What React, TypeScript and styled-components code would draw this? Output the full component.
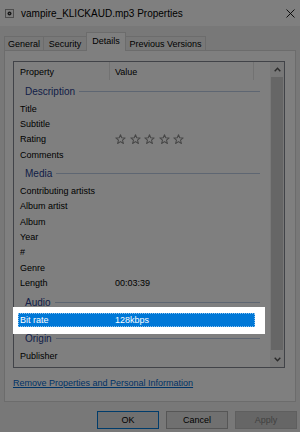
import React from 'react';
import styled, { createGlobalStyle } from 'styled-components';

const GlobalStyle = createGlobalStyle`
  html, body {
    margin: 0;
    padding: 0;
    background: #f0f0f0;
  }
  body {
    font-family: 'Liberation Sans', Arial, sans-serif;
    overflow: hidden;
  }
`;

const Window = styled.div`
  width: 300px;
  height: 432px;
  background: #f0f0f0;
  display: flex;
  flex-direction: column;
  color: #000;
  font-size: 9px;
`;

const TitleBar = styled.div`
  height: 26px;
  background: #fff;
  display: flex;
  align-items: center;
  padding: 1px 5px 0 5px;
  box-sizing: border-box;
`;

const TitleText = styled.span`
  flex: 1;
  margin-left: 7px;
  font-size: 10px;
`;

const TabStrip = styled.div`
  display: flex;
  align-items: flex-end;
  height: 24px;
  padding-left: 4px;
`;

const Tab = styled.div<{ $active?: boolean; $w: number }>`
  position: relative;
  width: ${(p) => p.$w}px;
  height: ${(p) => (p.$active ? 19 : 14)}px;
  margin-bottom: ${(p) => (p.$active ? -1 : 0)}px;
  margin-left: -1px;
  padding-bottom: ${(p) => (p.$active ? 2 : 0)}px;
  box-sizing: border-box;
  border: 1px solid #d9d9d9;
  border-bottom: none;
  background: ${(p) => (p.$active ? '#fff' : '#f0f0f0')};
  display: flex;
  align-items: center;
  justify-content: center;
  &:first-child {
    margin-left: 0;
  }
`;

const Panel = styled.div`
  margin: 0 4px;
  height: 352px;
  box-sizing: border-box;
  border: 1px solid #d9d9d9;
  background: #fff;
  padding: 10px 0 0 8px;
  display: flex;
  flex-direction: column;
`;

const ListBox = styled.div`
  width: 272px;
  height: 307px;
  box-sizing: border-box;
  border: 1px solid #828790;
  background: #fff;
  display: flex;
`;

const ListContent = styled.div`
  flex: 1;
  display: flex;
  flex-direction: column;
`;

const HeaderRow = styled.div`
  display: flex;
  height: 18px;
  flex-shrink: 0;
`;

const HeaderCell = styled.div<{ $w: number }>`
  width: ${(p) => p.$w}px;
  box-sizing: border-box;
  border-right: 1px solid #e5e5e5;
  padding: 1px 0 0 ${(p) => (p.$w > 100 ? 5 : 6)}px;
  display: flex;
  align-items: center;
`;

const GroupRow = styled.div`
  display: flex;
  align-items: center;
  height: 21px;
  flex-shrink: 0;
  padding: 1.5px 10px 0 11px;
  box-sizing: border-box;
`;

const GroupLabel = styled.span`
  font-size: 10px;
  color: #26408f;
`;

const GroupLine = styled.div`
  flex: 1;
  height: 1px;
  margin-left: 4px;
  background: #bccce4;
`;

const Item = styled.div<{ $selected?: boolean }>`
  display: flex;
  align-items: center;
  flex-shrink: 0;
  width: 237px;
  height: ${(p) => (p.$selected ? 14.35 : 15.35)}px;
  margin-left: ${(p) => (p.$selected ? 0 : 4)}px;
  background: ${(p) => (p.$selected ? '#0078d7' : 'transparent')};
  color: ${(p) => (p.$selected ? '#fff' : '#000')};
  outline: ${(p) => (p.$selected ? '1px dotted rgba(255,255,255,0.55)' : 'none')};
  outline-offset: -1px;
`;

const Name = styled.span`
  width: 95px;
  padding-left: 2px;
  box-sizing: border-box;
  white-space: nowrap;
`;

const Value = styled.span`
  padding-left: 2px;
  display: flex;
  align-items: center;
  gap: 3.5px;
`;

// white frame around the selected row; its spread shadow dims the rest of the dialog
const Spotlight = styled.div`
  position: relative;
  z-index: 10;
  width: 252px;
  box-sizing: border-box;
  margin: -4.6px 0 -6.6px -1px;
  padding: 5.6px 10px 6.6px 5px;
  background: #fff;
  box-shadow: 0 0 0 1200px rgba(0, 0, 0, 0.5);
`;

const ScrollBar = styled.div`
  width: 14px;
  display: flex;
  flex-direction: column;
  background: #f0f0f0;
`;

const ScrollArrow = styled.div`
  height: 15px;
  flex-shrink: 0;
  display: flex;
  align-items: center;
  justify-content: center;
`;

const ScrollThumb = styled.div`
  flex: 1;
  margin: 0 1px 2px;
  background: #cdcdcd;
`;

const Footer = styled.div`
  flex: 1;
  display: flex;
  align-items: center;
  padding-bottom: 3px;
`;

const Link = styled.a`
  color: #0066cc;
  text-decoration: underline;
  font-size: 9px;
`;

const ButtonRow = styled.div`
  display: flex;
  justify-content: flex-end;
  gap: 7px;
  padding-right: 3px;
  margin-top: 9px;
`;

const Button = styled.div<{ $default?: boolean; $disabled?: boolean }>`
  width: 62px;
  height: 18px;
  box-sizing: border-box;
  display: flex;
  align-items: center;
  justify-content: center;
  border: 1px solid
    ${(p) => (p.$default ? '#0078d7' : p.$disabled ? '#bfbfbf' : '#adadad')};
  background: ${(p) => (p.$disabled ? '#cccccc' : '#e1e1e1')};
  color: ${(p) => (p.$disabled ? '#838383' : '#000')};
`;

const Star = () => (
  <svg width="11" height="11" viewBox="0 0 12 12">
    <polygon
      points="6,0.8 7.35,4.14 11.1,4.3 8.19,6.71 9.2,10.4 6,8.3 2.8,10.4 3.81,6.71 0.9,4.3 4.65,4.14"
      fill="none"
      stroke="#8c8c8c"
      strokeWidth="1.1"
      strokeLinejoin="round"
    />
  </svg>
);

const Stars = () => (
  <>
    {[0, 1, 2, 3, 4].map((i) => (
      <Star key={i} />
    ))}
  </>
);

const FileIcon = () => (
  <svg width="9" height="9" viewBox="0 0 9 9">
    <rect x="0.5" y="0.5" width="8" height="8" fill="#fafafa" stroke="#9a9a9a" />
    <circle cx="4.5" cy="4.5" r="2" fill="#333" />
    <circle cx="4.5" cy="4.5" r="0.6" fill="#ddd" />
  </svg>
);

const CloseIcon = () => (
  <svg width="9" height="9" viewBox="0 0 9 9">
    <path d="M0.5 0.5 L8.5 8.5 M8.5 0.5 L0.5 8.5" stroke="#000" strokeWidth="0.9" />
  </svg>
);

const Chevron = ({ down }: { down?: boolean }) => (
  <svg width="7" height="5" viewBox="0 0 7 5">
    <polyline
      points={down ? '0.7,0.8 3.5,3.8 6.3,0.8' : '0.7,4.2 3.5,1.2 6.3,4.2'}
      fill="none"
      stroke="#555"
      strokeWidth="1.4"
    />
  </svg>
);

type Prop = { name: string; value?: React.ReactNode; selected?: boolean };

const groups: { title: string; items: Prop[] }[] = [
  {
    title: 'Description',
    items: [
      { name: 'Title' },
      { name: 'Subtitle' },
      { name: 'Rating', value: <Stars /> },
      { name: 'Comments' },
    ],
  },
  {
    title: 'Media',
    items: [
      { name: 'Contributing artists' },
      { name: 'Album artist' },
      { name: 'Album' },
      { name: 'Year' },
      { name: '#' },
      { name: 'Genre' },
      { name: 'Length', value: '00:03:39' },
    ],
  },
  {
    title: 'Audio',
    items: [{ name: 'Bit rate', value: '128kbps', selected: true }],
  },
  {
    title: 'Origin',
    items: [{ name: 'Publisher' }],
  },
];

const tabs = [
  { label: 'General', w: 40 },
  { label: 'Security', w: 44 },
  { label: 'Details', w: 40, active: true },
  { label: 'Previous Versions', w: 81 },
];

export default function App() {
  return (
    <>
      <GlobalStyle />
      <Window>
        <TitleBar>
          <FileIcon />
          <TitleText>vampire_KLICKAUD.mp3 Properties</TitleText>
          <CloseIcon />
        </TitleBar>
        <TabStrip>
          {tabs.map((t) => (
            <Tab key={t.label} $w={t.w} $active={t.active}>
              {t.label}
            </Tab>
          ))}
        </TabStrip>
        <Panel>
          <ListBox>
            <ListContent>
              <HeaderRow>
                <HeaderCell $w={96}>Property</HeaderCell>
                <HeaderCell $w={144}>Value</HeaderCell>
              </HeaderRow>
              {groups.map((g) => (
                <React.Fragment key={g.title}>
                  <GroupRow>
                    <GroupLabel>{g.title}</GroupLabel>
                    <GroupLine />
                  </GroupRow>
                  {g.items.map((it) =>
                    it.selected ? (
                      <Spotlight key={it.name}>
                        <Item $selected>
                          <Name>{it.name}</Name>
                          <Value>{it.value}</Value>
                        </Item>
                      </Spotlight>
                    ) : (
                      <Item key={it.name}>
                        <Name>{it.name}</Name>
                        <Value>{it.value}</Value>
                      </Item>
                    )
                  )}
                </React.Fragment>
              ))}
            </ListContent>
            <ScrollBar>
              <ScrollArrow>
                <Chevron />
              </ScrollArrow>
              <ScrollThumb />
              <ScrollArrow>
                <Chevron down />
              </ScrollArrow>
            </ScrollBar>
          </ListBox>
          <Footer>
            <Link>Remove Properties and Personal Information</Link>
          </Footer>
        </Panel>
        <ButtonRow>
          <Button $default>OK</Button>
          <Button>Cancel</Button>
          <Button $disabled>Apply</Button>
        </ButtonRow>
      </Window>
    </>
  );
}
